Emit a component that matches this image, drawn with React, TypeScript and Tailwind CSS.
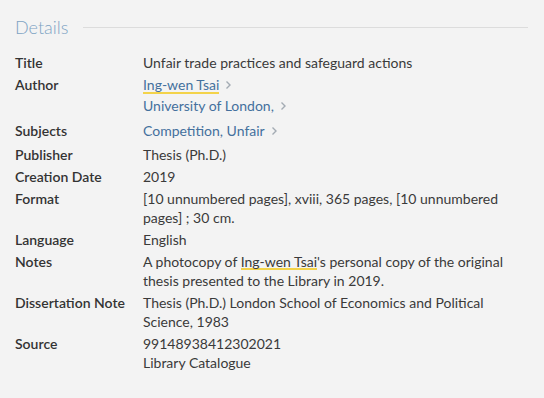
const Chevron = () => (
  <svg width="8" height="10" viewBox="0 0 8 10" className="ml-[5px] inline-block" aria-hidden>
    <path d="M2.5 1.5 L6 5 L2.5 8.5" fill="none" stroke="#a3abb3" strokeWidth="1.4" />
  </svg>
);

const Hl = ({ children }: { children: React.ReactNode }) => (
  <span className="bg-[linear-gradient(#f3d34a,#f3d34a)] bg-[length:100%_2px] bg-bottom bg-no-repeat">{children}</span>
);

const rows: { label: string; value: React.ReactNode; cls?: string }[] = [
  { label: "Title", value: "Unfair trade practices and safeguard actions" },
  {
    label: "Author",
    value: (
      <div className="flex flex-col gap-[2px] text-[#44709d]">
        <span className="flex items-center">
          <Hl>Ing-wen Tsai</Hl>
          <Chevron />
        </span>
        <span className="flex items-center">
          University of London,
          <Chevron />
        </span>
      </div>
    ),
    cls: "pb-[3px]",
  },
  {
    label: "Subjects",
    value: (
      <span className="flex items-center text-[#44709d]">
        Competition, Unfair
        <Chevron />
      </span>
    ),
    cls: "pb-[2px]",
  },
  { label: "Publisher", value: "Thesis (Ph.D.)" },
  { label: "Creation Date", value: "2019" },
  { label: "Format", value: "[10 unnumbered pages], xviii, 365 pages, [10 unnumbered pages] ; 30 cm." },
  { label: "Language", value: "English" },
  {
    label: "Notes",
    value: (
      <>
        A photocopy of <Hl>Ing-wen Tsai</Hl>'s personal copy of the original thesis presented to the Library in 2019.
      </>
    ),
  },
  { label: "Dissertation Note", value: "Thesis (Ph.D.) London School of Economics and Political Science, 1983" },
  {
    label: "Source",
    value: (
      <>
        99148938412302021
        <br />
        Library Catalogue
      </>
    ),
  },
];

export default function App() {
  return (
    <div className="min-h-[398px] w-[544px] bg-[#f3f3f3] pl-[15px] pr-[16px] pt-[14px] font-['Lato',sans-serif] text-[14px] text-[#3a3a3a]">
      <div className="flex items-center gap-[15px]">
        <h2 className="text-[18px] font-light leading-[26px] text-[#7ea3c3]">Details</h2>
        <div className="h-px flex-1 bg-[#dcdcdc]" />
      </div>
      <div className="mt-[13px] flex flex-col gap-[3px] leading-[19px]">
        {rows.map((r) => (
          <div key={r.label} className={`flex ${r.cls ?? ""}`}>
            <div className="w-[128px] shrink-0 font-semibold text-[#333]">{r.label}</div>
            <div className="flex-1 pr-[10px]">{r.value}</div>
          </div>
        ))}
      </div>
    </div>
  );
}
